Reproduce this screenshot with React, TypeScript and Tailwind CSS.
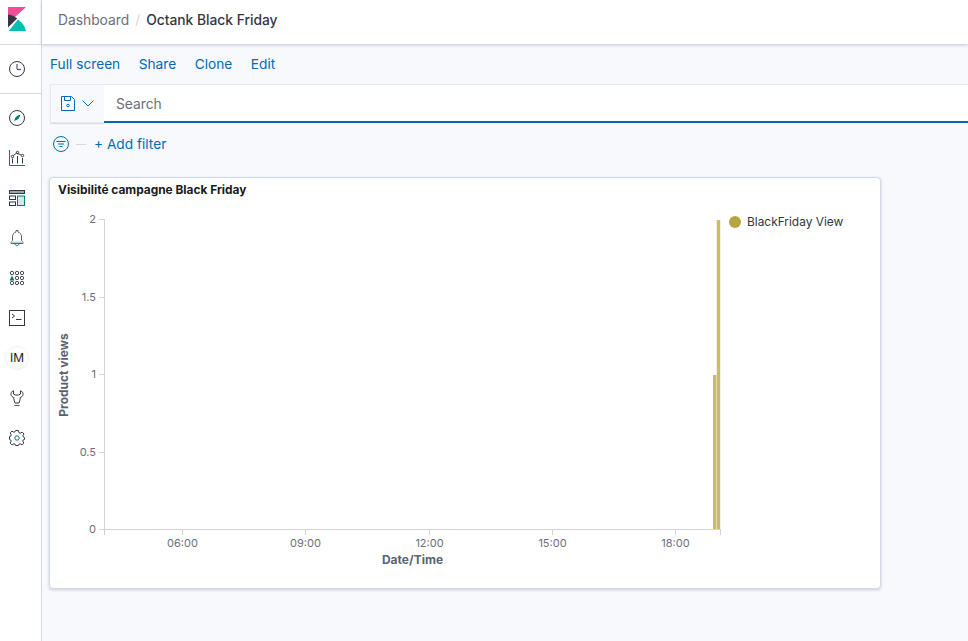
import React from 'react';

const stroke = '#343741';
const teal = '#017d73';

const KibanaLogo = () => (
  <svg width="18" height="24" viewBox="0 0 18 24">
    <path d="M0 0H18L0 16.5Z" fill="#f04e98" />
    <path d="M0 7.5V20.5L9.2 11.5C6.4 9.2 3.4 7.9 0 7.5Z" fill="#343741" />
    <path d="M9.9 12.6L1 23.8V24H18C17.2 19.5 14.4 15.6 9.9 12.6Z" fill="#00bfb3" />
  </svg>
);

const icons: React.ReactNode[] = [
  <svg key="compass" width="16" height="16" viewBox="0 0 16 16" fill="none">
    <circle cx="8" cy="8" r="7.5" stroke={stroke} />
    <path d="M11.2 4.8C11 7.6 9.2 10 6 10.6L4.8 11.2L5.4 10C6 7 8.4 5.2 11.2 4.8Z" fill={teal} />
  </svg>,
  <svg key="chart" width="16" height="16" viewBox="0 0 16 16" fill="none">
    <path d="M.5 0V15.5H16" stroke={teal} />
    <path d="M3.5 8.5V13.5M8.5 6V13.5M13.5 8V13.5" stroke={stroke} />
    <path d="M4.5 5.5L7.5 3L12 5" stroke={stroke} />
    <circle cx="3.5" cy="6.5" r="1.2" stroke={stroke} />
    <circle cx="8.5" cy="2.5" r="1.2" stroke={stroke} />
    <circle cx="13.5" cy="5.5" r="1.2" stroke={stroke} />
  </svg>,
  <svg key="dash" width="16" height="16" viewBox="0 0 16 16" fill="none">
    <rect x=".5" y=".5" width="15" height="3" fill="#98a2b3" stroke={stroke} />
    <rect x=".5" y="6" width="6" height="3.5" stroke={stroke} />
    <rect x=".5" y="12" width="6" height="3.5" stroke={stroke} />
    <rect x="8.5" y="6" width="7" height="9.5" stroke={teal} fill="#d3e8e6" />
  </svg>,
  <svg key="bell" width="16" height="16" viewBox="0 0 16 16" fill="none">
    <path d="M7 .5H9V2C11.4 2.5 12.5 4.5 12.5 7V10C12.5 11 14 11.5 14 12.5V13.5H2V12.5C2 11.5 3.5 11 3.5 10V7C3.5 4.5 4.6 2.5 7 2Z" stroke="#5a6270" />
    <path d="M2.5 11.5H13.5V13H2.5Z" fill="#b6d9d5" />
    <path d="M6 14C6.2 15 7 15.5 8 15.5C9 15.5 9.8 15 10 14" stroke={teal} />
  </svg>,
  <svg key="apps" width="16" height="16" viewBox="0 0 16 16" fill="none" stroke={stroke} strokeWidth=".9">
    <circle cx="3" cy="3" r="1.7" />
    <circle cx="8" cy="3" r="1.7" />
    <circle cx="13" cy="3" r="1.7" />
    <circle cx="8" cy="8" r="1.7" />
    <circle cx="13" cy="8" r="1.7" />
    <circle cx="3" cy="13" r="1.7" />
    <circle cx="8" cy="13" r="1.7" />
    <circle cx="13" cy="13" r="1.7" />
    <path d="M.5 10.5L3 5.5L5.5 10.5Z" fill={teal} stroke="none" />
  </svg>,
  <svg key="console" width="16" height="16" viewBox="0 0 16 16" fill="none">
    <rect x=".5" y=".5" width="15" height="15" stroke={stroke} />
    <path d="M3 4L5.5 6L3 8" stroke={stroke} />
    <path d="M7 9.5H12.5" stroke={stroke} />
  </svg>,
];

const NavIcon = ({ children }: { children: React.ReactNode }) => (
  <div className="flex h-10 w-full items-center justify-center pr-[7px]">{children}</div>
);

const Sidebar = () => (
  <aside className="flex h-full w-[41px] shrink-0 flex-col bg-white">
    <div className="flex h-[45px] items-start border-b border-[#d3dae6] pl-2 pt-[7px]">
      <KibanaLogo />
    </div>
    <div className="flex h-[49px] items-center justify-center border-b border-[#d3dae6] pr-[7px]">
      <svg width="16" height="16" viewBox="0 0 16 16" fill="none">
        <circle cx="8" cy="8" r="7.5" stroke={stroke} />
        <path d="M8 3V8" stroke={stroke} />
        <path d="M8 8.5H12" stroke={teal} strokeWidth="1.2" />
      </svg>
    </div>
    <div className="mt-[4px] flex flex-col">
      {icons.map((icon, i) => (
        <NavIcon key={i}>{icon}</NavIcon>
      ))}
      <NavIcon>
        <div className="flex h-6 w-6 items-center justify-center rounded-full border border-[#eef0f4] bg-white text-[12px] font-normal text-[#1a1c21]">
          IM
        </div>
      </NavIcon>
      <NavIcon>
        <svg width="16" height="16" viewBox="0 0 16 16" fill="none">
          <path d="M4.5 .8C2.4 1.5 1.8 3 2 4.6C2.2 6 3.4 7 4.8 7.5V8.8C4.8 10 5.6 12 6 13H10C10.4 12 11.2 10 11.2 8.8V7.5C12.6 7 13.8 6 14 4.6C14.2 3 13.6 1.5 11.5 .8V4L9.5 5H6.5L4.5 4Z" stroke={stroke} />
          <path d="M5.5 15.5H10.5" stroke={teal} />
        </svg>
      </NavIcon>
      <NavIcon>
        <svg width="16" height="16" viewBox="0 0 16 16" fill="none">
          <path d="M6.6.5H9.4L9.9 2.6L11.4 3.2L13.2 2.1L15 4L13.9 5.8L14.4 7L15.5 7.6V9.4L14.2 9.9L13.8 11.2L14.8 13.1L13 14.9L11.2 13.8L9.9 14.3L9.4 15.5H6.6L6.1 14.2L4.8 13.8L2.9 14.8L1.1 13L2.2 11.2L1.7 9.9L.5 9.4V6.6L1.8 6.1L2.2 4.8L1.2 2.9L3 1.1L4.8 2.2L6.1 1.7Z" stroke={stroke} strokeLinejoin="round" />
          <circle cx="8" cy="8" r="2.2" stroke={teal} />
        </svg>
      </NavIcon>
    </div>
  </aside>
);

const yTicks = [
  { label: '2', y: 219.5 },
  { label: '1.5', y: 297.5 },
  { label: '1', y: 374.5 },
  { label: '0.5', y: 452.5 },
  { label: '0', y: 529.5 },
];
const xTicks = [
  { label: '06:00', x: 182.5 },
  { label: '09:00', x: 305.5 },
  { label: '12:00', x: 429.5 },
  { label: '15:00', x: 552.5 },
  { label: '18:00', x: 675.5 },
];

// the svg sits at the card's inner top-left corner, so coordinates are shifted by this
const ox = 50;
const oy = 178;

const Chart = () => (
  <svg width="830" height="410" className="block" style={{ fontFamily: 'Inter, sans-serif' }}>
    <g transform={`translate(${-ox} ${-oy})`}>
      <path d="M104.5 219V535M104 529.5H720.5M720.5 529V535" stroke="#d3d3d3" fill="none" />
      {yTicks.map((t) => (
        <g key={t.label}>
          <path d={`M99 ${t.y}H104`} stroke="#d3d3d3" />
          <text x="96" y={t.y + 3.5} textAnchor="end" fontSize="11" fill="#69707d">
            {t.label}
          </text>
        </g>
      ))}
      {xTicks.map((t) => (
        <g key={t.label}>
          <path d={`M${t.x} 529V535`} stroke="#d3d3d3" />
          <text x={t.x} y="547" textAnchor="middle" fontSize="11" fill="#69707d">
            {t.label}
          </text>
        </g>
      ))}
      <rect x="713" y="375" width="3.4" height="154" fill="#c9bc6b" />
      <rect x="716.8" y="220" width="3.4" height="309" fill="#c9bc6b" />
      <text x="412.5" y="564" textAnchor="middle" fontSize="12" fontWeight="700" fill="#5a6270">
        Date/Time
      </text>
      <text
        transform="translate(68 375) rotate(-90)"
        textAnchor="middle"
        fontSize="12"
        fontWeight="700"
        fill="#5a6270"
      >
        Product views
      </text>
      <circle cx="735" cy="222" r="6" fill="#b7a640" />
      <text x="747" y="226" fontSize="11.9" fill="#343741">
        BlackFriday View
      </text>
    </g>
  </svg>
);

export default function App() {
  return (
    <div className="flex h-[641px] w-[968px] overflow-hidden bg-[#f8f9fd] font-['Inter',sans-serif]">
      <Sidebar />
      <main className="flex min-w-0 flex-1 flex-col border-l border-[#d3dae6]">
        <header className="flex h-[44px] shrink-0 items-center gap-[6px] bg-white pb-[3px] pl-4 text-[13.8px] shadow-[0_1px_3px_rgba(152,162,179,0.6)]">
          <span className="text-[#69707d]">Dashboard</span>
          <span className="text-[#d3dae6]">/</span>
          <span className="font-medium text-[#343741]">Octank Black Friday</span>
        </header>

        <nav className="flex h-[40px] items-center gap-[18.5px] pl-2 text-[13.7px] text-[#006bb4]">
          <span>Full screen</span>
          <span>Share</span>
          <span>Clone</span>
          <span>Edit</span>
        </nav>

        <div className="ml-2 flex h-[39px] items-stretch">
          <div className="flex w-[54px] items-center justify-center gap-[7px] border border-r-0 border-[#e4e8f0] bg-[#f8f9fd] shadow-[0_1px_1px_rgba(152,162,179,0.3)]">
            <svg width="14" height="15" viewBox="0 0 14 15" fill="none" stroke="#006bb4">
              <path d="M.5 .5H10.5L13.5 3.5V14.5H.5Z" />
              <path d="M3.5 .5V4.5H9.5V.5" />
              <circle cx="7" cy="9.5" r="1.3" />
            </svg>
            <svg width="12" height="7" viewBox="0 0 12 7" fill="none" stroke="#006bb4">
              <path d="M.5 .5L6 6L11.5 .5" />
            </svg>
          </div>
          <div className="flex flex-1 items-center border-b-2 border-t border-b-[#006bb4] border-t-[#e4e8f0] bg-white pl-3 pt-[2px] text-[13.8px] text-[#69707d]">
            Search
          </div>
        </div>

        <div className="ml-[11px] mt-[11px] flex h-[20px] items-center text-[13.7px] text-[#006bb4]">
          <svg width="16" height="16" viewBox="0 0 16 16" fill="none" stroke="#006bb4">
            <circle cx="8" cy="8" r="7.5" />
            <path d="M3.5 5.5H12.5M5 8H11M6.5 10.5H9.5" />
          </svg>
          <span className="ml-[7px] h-px w-[10px] bg-[#d3dae6]" />
          <span className="ml-[8px]">+ Add filter</span>
        </div>

        <section className="ml-[7px] mt-[23px] h-[412px] w-[832px] rounded-[4px] border border-[#d3dae6] bg-white shadow-[0_1px_3px_rgba(152,162,179,0.5)]">
          <div className="relative h-full">
            <h2 className="absolute left-2 top-[4px] text-[11.9px] font-bold leading-[16px] text-[#1a1c21]">
              Visibilité campagne Black Friday
            </h2>
            <Chart />
          </div>
        </section>
      </main>
    </div>
  );
}
